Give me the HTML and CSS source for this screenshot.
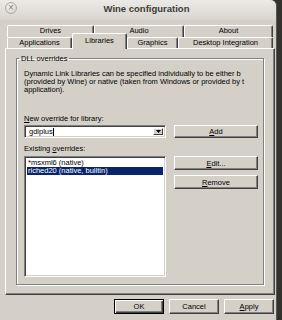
FILE: index.html
```html
<!DOCTYPE html>
<html>
<head>
    <title>Wine configuration</title>
    <link rel="stylesheet" href="styles.css">
</head>
<body>
    <div class="desktop">
        <div class="window">
            <div class="titlebar">
                <span class="close">&times;</span>
                <span class="title">Wine configuration</span>
            </div>
            <div class="body">
                <div class="tabs">
                    <div class="tab-row back">
                        <div class="tab tab-drives">Drives</div>
                        <div class="tab tab-audio">Audio</div>
                        <div class="tab tab-about">About</div>
                    </div>
                    <div class="tab-row front">
                        <div class="tab tab-apps">Applications</div>
                        <div class="tab tab-libs selected">Libraries</div>
                        <div class="tab tab-graphics">Graphics</div>
                        <div class="tab tab-desktop">Desktop Integration</div>
                    </div>
                </div>
                <div class="panel">
                    <fieldset class="group">
                        <legend>DLL overrides</legend>
                        <p class="desc">
                            <span>Dynamic Link Libraries can be specified individually to be either b</span>
                            <span>(provided by Wine) or native (taken from Windows or provided by t</span>
                            <span>application).</span>
                        </p>
                        <label class="field-label label-new"><u>N</u>ew override for library:</label>
                        <div class="row row-combo">
                            <div class="combo">
                                <span class="combo-text">gdiplus<span class="caret"></span></span>
                                <span class="combo-arrow">
                                    <svg width="5" height="3" viewBox="0 0 5 3"><path d="M0 0h5L2.5 3z" fill="#000"/></svg>
                                </span>
                            </div>
                            <button class="btn btn-side"><u>A</u>dd</button>
                        </div>
                        <label class="field-label label-existing">Existing <u>o</u>verrides:</label>
                        <div class="row row-list">
                            <ul class="list">
                                <li>*msxml6 (native)</li>
                                <li class="selected">riched20 (native, builtin)</li>
                            </ul>
                            <div class="side-buttons">
                                <button class="btn btn-side"><u>E</u>dit...</button>
                                <button class="btn btn-side"><u>R</u>emove</button>
                            </div>
                        </div>
                    </fieldset>
                </div>
                <div class="dialog-buttons">
                    <button class="btn btn-dialog btn-default">OK</button>
                    <button class="btn btn-dialog">Cancel</button>
                    <button class="btn btn-dialog"><u>A</u>pply</button>
                </div>
            </div>
        </div>
        <div class="edge"></div>
    </div>
</body>
</html>
```

FILE: styles.css
```css
* {
    box-sizing: border-box;
}
body {
    margin: 0;
    font-family: "Liberation Sans", Tahoma, Arial, sans-serif;
    font-size: 7.5px;
    color: #000;
}
.desktop {
    display: flex;
    width: 282px;
    height: 320px;
    background: #33322e;
    overflow: hidden;
}
.window {
    width: 277px;
    height: 320px;
    background: #d4d0c8;
    border-right: 1px solid #5a5854;
    border-top-right-radius: 6px;
}
.edge {
    flex: 1;
}

/* title bar */
.titlebar {
    height: 20px;
    display: flex;
    align-items: center;
    padding: 0 0 4px 5px;
    background: linear-gradient(#eceae6, #d8d5cf);
    border-top-right-radius: 6px;
}
.close {
    width: 12px;
    height: 12px;
    border-radius: 50%;
    background: radial-gradient(circle at 40% 35%, #f7f6f4, #cfccc6);
    border: 1px solid #aeaaa3;
    color: #807c76;
    font-size: 10px;
    line-height: 9px;
    text-align: center;
}
.title {
    flex: 1;
    text-align: center;
    font-weight: bold;
    font-size: 9.5px;
    color: #3c3b37;
}

/* body */
.body {
    padding: 5px 1px 0 5px;
}
.tabs {
    padding: 0 1px 0 2px;
}
.tab-row {
    display: flex;
}
.back {
    height: 12px;
}
.front {
    height: 11px;
    align-items: flex-end;
}
.tab {
    height: 100%;
    border: 1px solid;
    border-color: #fff #404040 transparent #fff;
    border-bottom: none;
    box-shadow: inset -1px 0 #808080;
    border-radius: 2px 2px 0 0;
    text-align: center;
    line-height: 10px;
    background: #d4d0c8;
}
.tab-drives { width: 87px; }
.tab-audio { width: 90px; }
.tab-about { width: 89px; }
.tab-apps { width: 65px; }
.tab-libs { width: 55px; }
.tab-graphics { width: 51px; }
.tab-desktop { width: 95px; }
.tab.selected {
    position: relative;
    z-index: 1;
    height: 16px;
    margin-top: -5px;
    margin-bottom: -1px;
    line-height: 13px;
}

/* tab page */
.panel {
    width: 270px;
    border: 1px solid;
    border-color: #fff #404040 #404040 #fff;
    box-shadow: inset -1px -1px #808080;
    padding: 5px 10px 9px 10px;
}
.group {
    margin: 0;
    min-width: 0;
    padding: 7px 5px 7px 7px;
    border: 1px solid #808080;
    box-shadow: inset 1px 1px #fff, 1px 1px #fff;
}
.group legend {
    padding: 0 2px;
    margin-left: -5px;
    line-height: 9px;
}
.desc {
    margin: 0;
    line-height: 8px;
    white-space: nowrap;
    overflow: hidden;
}
.desc span {
    display: block;
}
.field-label {
    display: block;
    line-height: 8px;
}
.label-new {
    margin-top: 21px;
}
.label-existing {
    margin-top: 7px;
}
.row {
    display: flex;
    gap: 8px;
}
.row-combo {
    margin-top: 2px;
    height: 13px;
}
.row-list {
    margin-top: 3px;
}
.combo {
    width: 142px;
    display: flex;
    background: #fff;
    border: 1px solid;
    border-color: #808080 #fff #fff #808080;
    box-shadow: inset 1px 1px #404040, inset -1px -1px #d4d0c8;
    padding: 2px;
}
.combo-text {
    flex: 1;
    display: flex;
    align-items: center;
    padding-left: 2px;
}
.caret {
    width: 1px;
    height: 8px;
    background: #000;
}
.combo-arrow {
    width: 10px;
    display: flex;
    align-items: center;
    justify-content: center;
    background: #d4d0c8;
    border: 1px solid;
    border-color: #fff #404040 #404040 #fff;
}
.list {
    margin: 0;
    padding: 2px;
    list-style: none;
    width: 142px;
    height: 121px;
    background: #fff;
    border: 1px solid;
    border-color: #808080 #fff #fff #808080;
    box-shadow: inset 1px 1px #404040, inset -1px -1px #d4d0c8;
}
.list li {
    line-height: 8px;
    padding-left: 1px;
    white-space: nowrap;
}
.list li.selected {
    background: #0a246a;
    color: #fff;
}
.side-buttons {
    display: flex;
    flex-direction: column;
    gap: 5px;
}

/* buttons */
.btn {
    font: inherit;
    color: #000;
    padding: 0;
    background: #d4d0c8;
    border: 1px solid;
    border-color: #fff #404040 #404040 #fff;
    box-shadow: inset -1px -1px #808080;
}
.btn-side {
    width: 84px;
    height: 14px;
}
.row-combo .btn-side {
    height: 13px;
}
.dialog-buttons {
    display: flex;
    justify-content: flex-end;
    gap: 5px;
    margin: 4px 1px 0 0;
}
.btn-dialog {
    width: 50px;
    height: 15px;
}
.btn-default {
    border-color: #000;
    box-shadow: inset 1px 1px #fff, inset -1px -1px #404040, inset -2px -2px #808080;
}
```
